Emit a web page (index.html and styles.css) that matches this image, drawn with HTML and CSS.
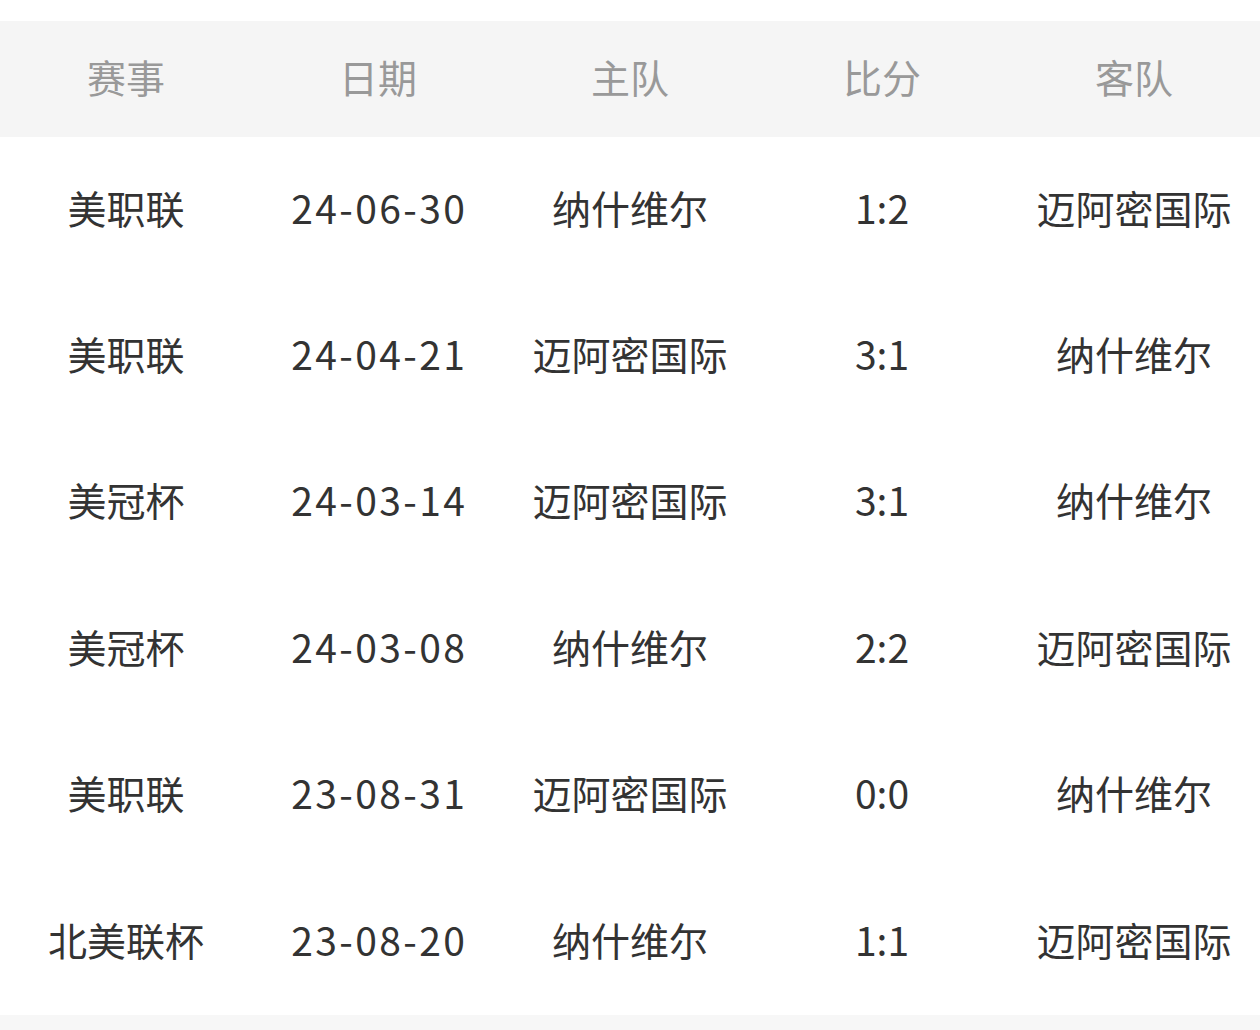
FILE: index.html
```html
<!DOCTYPE html>
<html lang="zh-CN">
<head>
<meta charset="utf-8">
<link rel="stylesheet" href="styles.css">
</head>
<body>
<div class="page">
  <div class="row head">
    <div class="cell">赛事</div>
    <div class="cell">日期</div>
    <div class="cell">主队</div>
    <div class="cell">比分</div>
    <div class="cell">客队</div>
  </div>
  <div class="row">
    <div class="cell">美职联</div><div class="cell date">24-06-30</div><div class="cell">纳什维尔</div><div class="cell">1:2</div><div class="cell">迈阿密国际</div>
  </div>
  <div class="row">
    <div class="cell">美职联</div><div class="cell date">24-04-21</div><div class="cell">迈阿密国际</div><div class="cell">3:1</div><div class="cell">纳什维尔</div>
  </div>
  <div class="row">
    <div class="cell">美冠杯</div><div class="cell date">24-03-14</div><div class="cell">迈阿密国际</div><div class="cell">3:1</div><div class="cell">纳什维尔</div>
  </div>
  <div class="row">
    <div class="cell">美冠杯</div><div class="cell date">24-03-08</div><div class="cell">纳什维尔</div><div class="cell">2:2</div><div class="cell">迈阿密国际</div>
  </div>
  <div class="row">
    <div class="cell">美职联</div><div class="cell date">23-08-31</div><div class="cell">迈阿密国际</div><div class="cell">0:0</div><div class="cell">纳什维尔</div>
  </div>
  <div class="row">
    <div class="cell">北美联杯</div><div class="cell date">23-08-20</div><div class="cell">纳什维尔</div><div class="cell">1:1</div><div class="cell">迈阿密国际</div>
  </div>
  <div class="foot"></div>
</div>
</body>
</html>
```
FILE: styles.css
```css
html, body {
  margin: 0;
  padding: 0;
  background: #ffffff;
}
.page {
  padding-top: 21px;
  font-family: "Noto Sans CJK SC", "Noto Sans", sans-serif;
  font-size: 39px;
  color: #333333;
}
.row {
  display: grid;
  grid-template-columns: repeat(5, 1fr);
  height: 146.4px;
  align-items: center;
}
.row.head {
  height: 116px;
  background: #f5f5f5;
  color: #999999;
}
.cell {
  text-align: center;
  white-space: nowrap;
  line-height: 1;
  padding-bottom: 6px;
}
.cell.date {
  letter-spacing: 2.4px;
  padding-left: 2.4px;
}
.foot {
  height: 20px;
  background: #f7f7f7;
}
```
